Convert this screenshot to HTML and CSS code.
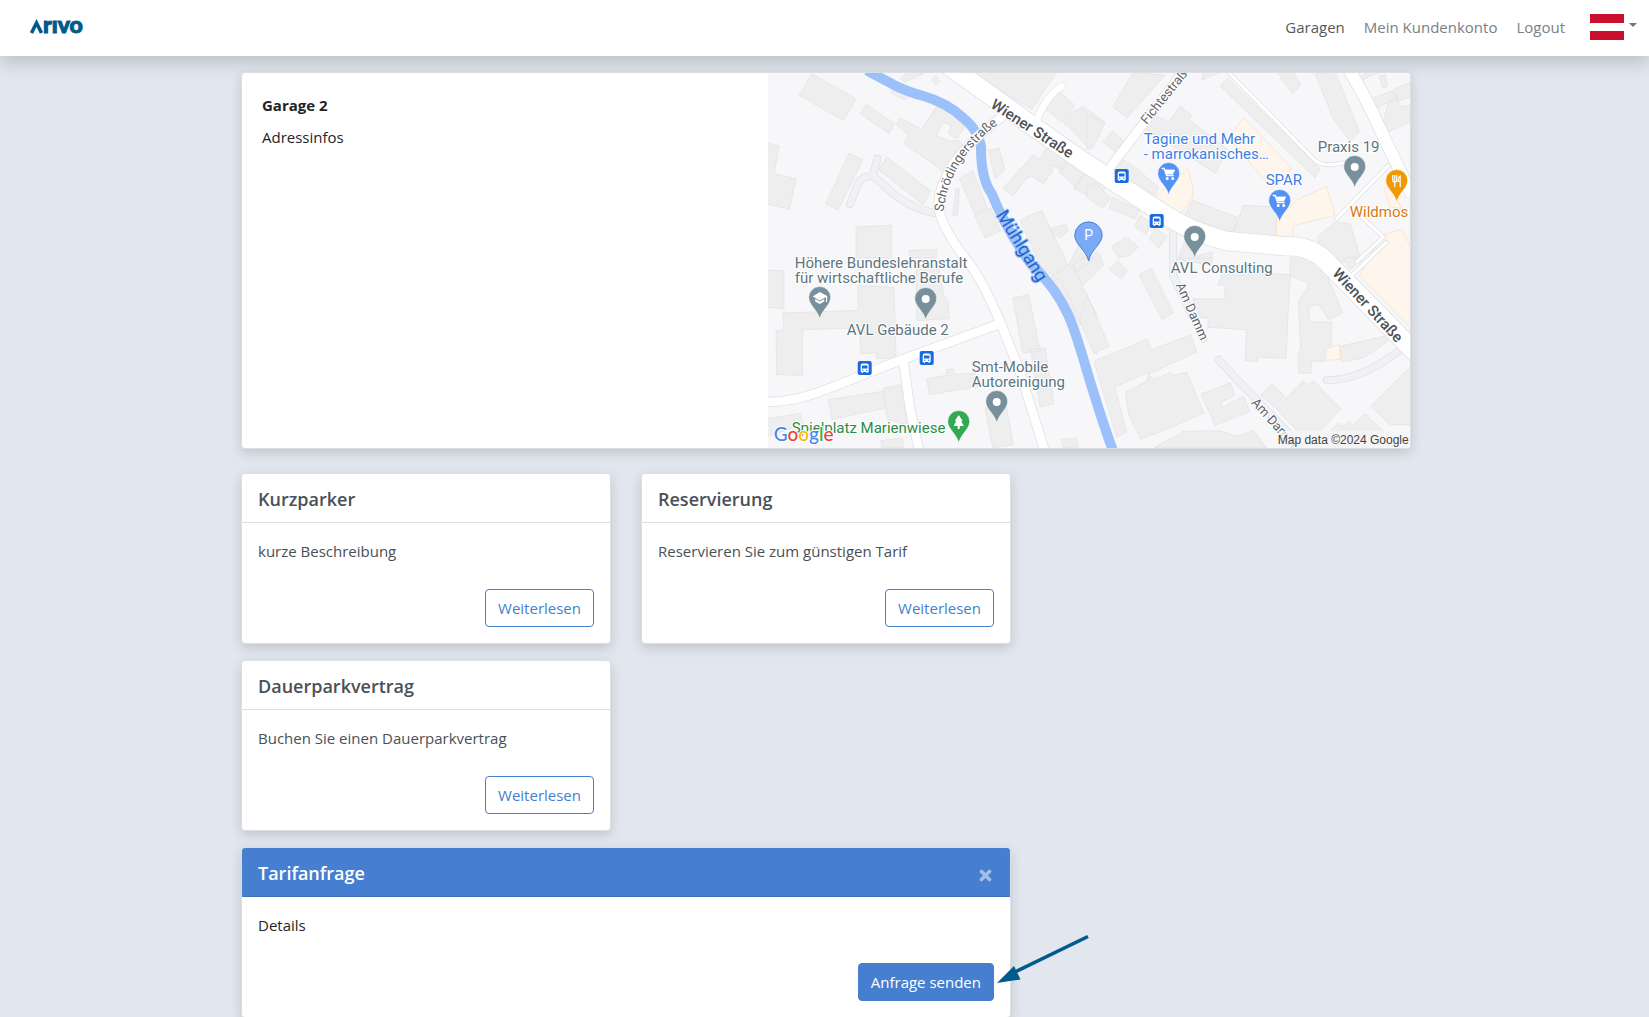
FILE: index.html
```html
<!DOCTYPE html>
<html lang="de">
<head>
<meta charset="utf-8">
<meta name="viewport" content="width=device-width, initial-scale=1">
<title>Arivo – Garage 2</title>
<link rel="stylesheet" href="styles.css">
</head>
<body>
<header class="navbar">
  <a class="brand" href="#" aria-label="Arivo">
    <svg width="64" height="24" viewBox="0 0 64 24">
      <path d="M3.500 18L8.500 8L13.500 18" fill="none" stroke="#005b8c" stroke-width="3.600"/>
      <text x="15" y="18" class="brand-text">rıvo</text>
    </svg>
  </a>
  <nav class="nav">
    <a class="nav-link active" href="#">Garagen</a>
    <a class="nav-link" href="#">Mein Kundenkonto</a>
    <a class="nav-link" href="#">Logout</a>
    <button class="lang" type="button" aria-label="Sprache">
      <span class="flag"></span><span class="caret"></span>
    </button>
  </nav>
</header>

<main class="page">
  <section class="card garage">
    <div class="garage-info">
      <h1>Garage 2</h1>
      <p>Adressinfos</p>
    </div>
    <svg class="map" viewBox="0 0 643 375" preserveAspectRatio="xMidYMid slice" role="img" aria-label="Karte">
      <defs>
        <g id="pin"><path d="M0 32C-2 23-11 18-11 10.500A10.800 10.800 0 0 1 11 10.500C11 18 2 23 0 32Z" stroke="#fff" stroke-width=".6"/></g>
        <g id="dot"><circle cx="0" cy="11" r="4" fill="#fff"/></g>
        <g id="cart" fill="none" stroke="#fff" stroke-width="1.500"><path d="M-7 5.500H-4.500L-2 12.500H5"/><path d="M-3.500 7H6L4 11H-2Z" fill="#fff" stroke-width=".8"/><circle cx="-1.500" cy="15.500" r=".8"/><circle cx="4" cy="15.500" r=".8"/></g>
        <g id="bus"><rect width="14" height="14" rx="2" fill="#1a6be0"/><path d="M3 4.500Q3 2.500 5 2.500H9Q11 2.500 11 4.500V11H10V12H8.800V11H5.200V12H4V11H3Z" fill="#fff"/><path d="M4.200 4.500H9.800V7.500H4.200ZM4.500 8.800H5.700V9.800H4.500ZM8.300 8.800H9.500V9.800H8.300Z" fill="#1a6be0"/></g>
        <path id="schroe" d="M175.500 139C179 113 189 91 205 74C214 64 222 57 236 47"/>
      </defs>
      <rect width="643" height="375" fill="#f7f7fa"/>
      <g transform="translate(-1 -1) scale(.33333)">
        <g class="bld">
          <path d="M135 5L268 80L230 146L97 70ZM298 97L384 155L367 185L280 125ZM398 137L465 172L512 100L598 157L572 200L546 185L553 160L530 150L508 190L550 208L576 205L606 232L585 268L560 270L540 305L460 248L412 215L425 190L390 158ZM384 45L430 70L415 84L372 62ZM0 212L38 222L22 305L88 320L68 412L0 396ZM248 243L288 264L214 414L177 396ZM361 255L492 358L468 398L335 292ZM578 320L618 296L662 408L625 428ZM672 408L702 476L656 497L624 432ZM568 350L578 352L572 430L558 430ZM665 235L698 228L714 295L685 320ZM798 250L818 262L840 226L906 265L890 294L850 280L858 296L830 335L795 312L778 320L740 372L708 350ZM905 262L958 295L930 345L876 300ZM958 298L1020 330L1000 392L920 348ZM760 445L825 415L895 560L960 700L940 760L850 600L836 615ZM850 470L895 457L905 475L885 497L860 485ZM268 465L374 460V558H268ZM428 535L510 533V558H428ZM945 500L1000 548L1010 580L950 640L905 580ZM620 0H870L795 112L722 68L655 22ZM830 108L880 62L922 98L910 125L950 103L1015 150L965 226L908 165ZM400 20L425 0L470 5L450 15L415 30ZM495 22L508 12L520 28L507 40Z"/>
          <g transform="translate(960 0)">
            <path d="M140 0L235 10L120 138L78 104ZM48 210L78 178L112 208L84 238ZM0 130L55 152L20 225L0 232ZM205 128L245 150L280 102L314 128L308 145L420 230L387 303L165 165ZM85 283L108 262L150 290L215 345L204 376L150 345L132 330L80 305ZM425 20L700 290L685 317L400 42ZM570 0H620L643 40L617 64ZM685 5L745 0L778 80L818 180L790 208L740 140ZM0 345L22 332L72 378L48 410L0 375ZM78 376L158 415L146 440L68 408ZM160 430L195 452L178 488L143 462ZM205 468L240 494L215 528L188 500ZM318 385L452 436L440 482L292 432ZM470 400L572 405V494L440 484ZM75 525L118 495L155 525L130 550L95 558ZM292 510L325 552L378 540L370 570H270ZM692 495L745 450L790 455L825 570H760L700 525ZM855 80L920 55L930 80L862 112ZM878 12L896 8L902 42L888 48ZM925 50L972 30V75L935 88ZM888 155L905 90L930 80L942 105L970 100V150L900 182ZM800 20L850 0H880L812 30ZM350 0H400L345 25Z"/>
          </g>
          <g transform="translate(0 558)">
            <path d="M0 36L52 38V152L0 148ZM48 165L274 157V82L382 88L388 300L330 302L328 284L282 288L278 210L108 215V352L30 350L28 218L52 216ZM448 22H515L530 108L545 130L548 182L450 188ZM738 120L786 110L820 280L768 285ZM792 275L835 270L862 438L820 446ZM480 362L538 352L540 335L560 333L563 350L625 345L640 385L488 410ZM185 425L348 400L358 450L196 484ZM350 390L406 380L420 500L362 485ZM0 483L100 466L110 500L0 535ZM655 450L715 425L740 560L678 570ZM342 548L408 540L410 570H345ZM885 545L930 540L935 570H890ZM850 60L905 20L920 30L990 170V290L880 60L860 70ZM920 20L950 0H985L930 40Z"/>
          </g>
          <g transform="translate(960 558)">
            <path d="M0 110L68 265L22 286L-20 190ZM157 50L194 30L260 165L226 184ZM68 35L92 8L122 38L104 62ZM276 0H380L370 20L300 10ZM410 42L610 50L598 300L512 298V310L475 308L480 215L364 208V180L340 178L318 122H415V82L392 80ZM22 310L182 243L195 275L312 230L330 282L196 344L180 345L84 388L120 522L90 538ZM116 402L180 370L186 345L200 365L250 345L260 352L300 342L352 465L220 522L162 543L126 470ZM343 408L432 374L444 412L402 435L408 448L470 415L490 460L385 502ZM522 410L556 378L594 415L562 448ZM568 450L650 368L664 380L680 368L762 452L665 560L640 530ZM202 570L290 520L400 518L450 535L500 518L540 570ZM720 530L755 495L770 505L788 490L800 500L835 468L890 520V570H740ZM852 445L972 325V500L910 500ZM610 0L680 5L718 45L768 165L725 186L695 138L665 148L670 192H735V272L715 310H675V345H635V280L642 275L635 128L665 85L660 72L610 55ZM760 265L900 233L910 245L830 300L765 312Z"/>
            <path d="M770 0H830L790 35Z"/>
          </g>
        </g>
        <g class="shop">
          <path d="M1432 138L1574 288L1550 325L1515 350L1385 195ZM1235 315L1264 290L1280 352L1276 380L1240 430L1165 378L1205 340ZM1570 405L1590 385L1680 342L1705 430L1580 462V494L1530 493V440ZM1845 490L1905 472L1935 530V770L1778 612Z"/>
          <path d="M1852 350L1870 340L1905 410L1870 405ZM1678 830L1718 818L1722 862L1676 865Z"/>
        </g>
        <path class="water" d="M300 -5L380 38Q430 62 470 72Q540 92 590 138Q635 175 643 225Q642 320 675 365Q720 475 790 572Q870 650 905 730C945 820 960 920 1040 1140"/>
        <g class="path-edge"><path d="M332 260L318 312Q285 312 275 335L250 396M318 312L350 338Q420 410 515 425M1219 460V610L1310 800M1355 863L1600 1120M1680 925Q1780 925 1895 838"/></g>
        <g class="path-fill"><path d="M332 260L318 312Q285 312 275 335L250 396M318 312L350 338Q420 410 515 425M1219 460V610L1310 800M1355 863L1600 1120M1680 925Q1780 925 1895 838"/></g>
        <g class="edge">
          <path class="w54" d="M530 -30L720 105L820 178L960 275L1060 340L1190 425Q1270 480 1380 507L1560 523Q1640 520 1690 580L1950 845"/>
          <path class="w28" d="M705 135Q520 270 515 400Q520 460 600 565Q640 610 700 748L760 900L835 1140M0 990C120 990 200 940 400 865L700 755M410 868L430 1010L458 1140M1260 -15L1035 280"/>
          <path class="w34" d="M1745 -10Q1800 80 1830 150L1930 360"/>
          <path class="w20" d="M885 43Q840 70 812 140"/>
          <path class="w10" d="M1380 -5L1640 260Q1665 290 1740 270M1865 280L1710 440M1770 570L1850 495L1780 430M1755 610L1860 510"/>
        </g>
        <g class="road">
          <path class="w54" d="M530 -30L720 105L820 178L960 275L1060 340L1190 425Q1270 480 1380 507L1560 523Q1640 520 1690 580L1950 845"/>
          <path class="w28" d="M705 135Q520 270 515 400Q520 460 600 565Q640 610 700 748L760 900L835 1140M0 990C120 990 200 940 400 865L700 755M410 868L430 1010L458 1140M1260 -15L1035 280"/>
          <path class="w34" d="M1745 -10Q1800 80 1830 150L1930 360"/>
          <path class="w20" d="M885 43Q840 70 812 140"/>
          <path class="w10" d="M1380 -5L1640 260Q1665 290 1740 270M1865 280L1710 440M1770 570L1850 495L1780 430M1755 610L1860 510"/>
        </g>
      </g>
      <g class="street">
        <text class="big" transform="translate(222 34) rotate(33)">Wiener Straße</text>
        <text class="big" transform="translate(564 201) rotate(47)">Wiener Straße</text>
        <text><textPath href="#schroe">Schrödingerstraße</textPath></text>
        <text transform="translate(379 52) rotate(-51)">Fichtestraße</text>
        <text transform="translate(408 212) rotate(66)">Am Damm</text>
        <text transform="translate(483 330) rotate(48)">Am Damm</text>
        <text class="river" transform="translate(228 142) rotate(58)">Mühlgang</text>
      </g>
      <g class="poi">
        <text x="27" y="195">Höhere Bundeslehranstalt</text>
        <text x="27" y="210">für wirtschaftliche Berufe</text>
        <text x="79" y="262">AVL Gebäude 2</text>
        <text x="204" y="299">Smt-Mobile</text>
        <text x="204" y="314">Autoreinigung</text>
        <text x="403" y="200">AVL Consulting</text>
        <text x="550" y="79">Praxis 19</text>
        <text class="blue" x="376" y="71">Tagine und Mehr</text>
        <text class="blue" x="376" y="86">- marrokanisches…</text>
        <text class="blue" x="498" y="112">SPAR</text>
        <text class="orange" x="582" y="144">Wildmos</text>
        <text class="green" x="24" y="360">Spielplatz Marienwiese</text>
      </g>
      <g fill="#78909c">
        <use href="#pin" x="52" y="214"/><use href="#pin" x="158" y="215"/><use href="#pin" x="229" y="318"/><use href="#pin" x="427" y="153"/><use href="#pin" x="587" y="83"/>
      </g>
      <use href="#dot" x="158" y="215"/><use href="#dot" x="229" y="318"/><use href="#dot" x="427" y="153"/><use href="#dot" x="587" y="83"/>
      <path d="M52 219L59.500 223V229H58.200V224L52 227.500L45 223.500ZM47.500 226L52 228.500L56.500 226V228.500L52 231L47.500 228.500Z" fill="#fff"/>
      <g fill="#5491f5"><use href="#pin" x="401" y="90"/><use href="#pin" x="512" y="117"/></g>
      <use href="#cart" x="401" y="90"/><use href="#cart" x="512" y="117"/>
      <use href="#pin" x="629" y="97" fill="#f29900"/>
      <path d="M625 102V107Q625 109 627 109V114M627 102V109M629 102V107Q629 109 627 109M632.500 114V103Q630.500 104 630.500 108.500H632.500" fill="none" stroke="#fff" stroke-width="1.200"/>
      <use href="#pin" x="191" y="338" fill="#34a853"/>
      <path d="M191 342L195 348H193.500L196 353H192V356H190V353H186L188.500 348H187Z" fill="#fff"/>
      <path d="M321 188C318 176 307 172 307 161.500A13.800 13.800 0 0 1 334.500 161.500C334.500 172 323 176 321 188Z" fill="#7baaf7" stroke="#4d7fd0"/>
      <text class="park" x="321" y="167">P</text>
      <use href="#bus" x="347" y="96"/><use href="#bus" x="382" y="141"/><use href="#bus" x="90" y="288"/><use href="#bus" x="152" y="278"/>
      <text class="google" x="6" y="368"><tspan fill="#4285f4">G</tspan><tspan fill="#ea4335">o</tspan><tspan fill="#fbbc04">o</tspan><tspan fill="#4285f4">g</tspan><tspan fill="#34a853">l</tspan><tspan fill="#ea4335">e</tspan></text>
      <rect x="511" y="358" width="132" height="17" fill="#f5f5f5" opacity=".75"/>
      <text class="copy" x="641" y="371">Map data ©2024 Google</text>
    </svg>
  </section>

  <div class="offers">
    <article class="card offer">
      <h2>Kurzparker</h2>
      <div class="card-body"><p>kurze Beschreibung</p><button class="btn" type="button">Weiterlesen</button></div>
    </article>
    <article class="card offer">
      <h2>Reservierung</h2>
      <div class="card-body"><p>Reservieren Sie zum günstigen Tarif</p><button class="btn" type="button">Weiterlesen</button></div>
    </article>
    <article class="card offer newline">
      <h2>Dauerparkvertrag</h2>
      <div class="card-body"><p>Buchen Sie einen Dauerparkvertrag</p><button class="btn" type="button">Weiterlesen</button></div>
    </article>
    <article class="card request">
      <div class="request-head"><h2>Tarifanfrage</h2><button class="close" type="button" aria-label="Schließen">
        <svg width="13" height="13" viewBox="0 0 13 13"><path d="M2.500 2.500L10.500 10.500M10.500 2.500L2.500 10.500" stroke="#fff" stroke-width="3.600" stroke-linecap="round"/></svg>
      </button></div>
      <div class="card-body"><p>Details</p><button class="btn primary" type="button">Anfrage senden</button></div>
      <svg class="pointer" width="96" height="52" viewBox="0 0 96 52" aria-hidden="true"><path d="M20 38L93 2.500" stroke="#005b8c" stroke-width="3.600"/><path d="M2 49L19 32L25.500 45.500Z" fill="#005b8c"/></svg>
    </article>
  </div>
</main>
</body>
</html>
```

FILE: styles.css
```css
* { box-sizing: border-box; }
body {
  margin: 0;
  background: #e2e6ee;
  color: #212529;
  font: 15px/24px "Open Sans", "Noto Sans", sans-serif;
}
h1, h2, p { margin: 0; }
button { font: inherit; cursor: pointer; }

.navbar {
  display: flex;
  align-items: center;
  justify-content: space-between;
  height: 56px;
  padding: 0 12px 2px 28px;
  background: #fff;
  box-shadow: 0 8px 16px rgba(0, 0, 0, .15);
}
.brand { display: flex; }
.brand-text {
  font: 900 23px Lato, sans-serif;
  fill: #005b8c;
  stroke: #005b8c;
  stroke-width: 1px;
}
.nav { display: flex; align-items: center; gap: 19px; }
.nav-link { color: #7a8087; text-decoration: none; }
.nav-link.active { color: #54595e; }
.lang {
  display: flex;
  gap: 5px;
  margin-left: 6px;
  padding: 0;
  border: 0;
  background: none;
}
.flag {
  width: 34px;
  height: 26px;
  background: linear-gradient(#c8102e 0 9px, #fff 9px 17px, #c8102e 17px);
}
.caret {
  margin-top: 9px;
  height: 4px;
  border: 4px solid transparent;
  border-top-color: #6f757b;
  border-bottom: 0;
}

.page {
  max-width: 1173px;
  margin: 16px auto 0;
  padding-left: 3px;
}
.card {
  background: #fff;
  border: 1px solid #dcdfe1;
  border-radius: 4px;
  box-shadow: 0 4px 12px rgba(0, 0, 0, .15);
}
.garage {
  display: grid;
  grid-template-columns: 45fr 55fr;
  overflow: hidden;
}
.garage-info { padding: 20px; }
.garage h1 { margin-bottom: 8px; font-size: 15px; line-height: 24px; }
.map { display: block; width: 100%; height: 375px; }

.offers {
  display: grid;
  grid-template-columns: repeat(3, 1fr);
  gap: 16px 30px;
  margin-top: 24px;
}
.newline { grid-column: 1; }
.offer { color: #495057; }
.card h2 { font-size: 18px; font-weight: 600; line-height: 24px; }
.offer h2 { padding: 13px 16px 11px; border-bottom: 1px solid #dcdfe1; }
.card-body {
  display: flex;
  flex-direction: column;
  gap: 26px;
  padding: 16px;
}
.btn {
  align-self: flex-end;
  height: 38px;
  padding: 0 12px;
  border: 1px solid #467fcf;
  border-radius: 4px;
  background: #fff;
  color: #467fcf;
}
.primary { background: #467fcf; color: #fff; }

.request { position: relative; grid-column: 1 / 3; }
.request-head {
  display: flex;
  align-items: center;
  justify-content: space-between;
  padding: 13px 16px 11px;
  border-bottom: 1px solid #3f72ba;
  border-radius: 3px 3px 0 0;
  background: #467fcf;
  color: #fff;
}
.close {
  display: flex;
  padding: 4px 2px 0;
  border: 0;
  background: none;
  opacity: .5;
}
.pointer { position: absolute; left: calc(100% - 15px); top: 86px; }

.bld path { fill: #eee; stroke: #dfe1e3; stroke-width: 2; }
.shop path { fill: #fef5ec; stroke: #fbdcbc; stroke-width: 2; }
.water { fill: none; stroke: #9cc0fa; stroke-width: 30; }
.path-edge, .path-fill, .edge, .road { fill: none; stroke-linecap: round; stroke-linejoin: round; }
.path-edge { stroke: #dcdfe3; stroke-width: 24; }
.path-fill { stroke: #eff1f3; stroke-width: 20; }
.edge { stroke: #e0e2e6; }
.road { stroke: #fff; }
.edge .w54 { stroke-width: 60; }
.road .w54 { stroke-width: 55; }
.edge .w34 { stroke-width: 40; }
.road .w34 { stroke-width: 35; }
.edge .w28 { stroke-width: 31; }
.road .w28 { stroke-width: 26; }
.edge .w20 { stroke-width: 24; }
.road .w20 { stroke-width: 20; }
.edge .w10 { stroke-width: 14; }
.road .w10 { stroke-width: 9; }
.map text { font-family: Roboto, sans-serif; paint-order: stroke; stroke: #fff; stroke-width: 2px; stroke-linejoin: round; }
.street text { font-size: 13px; fill: #5f6368; }
.street .big { font-size: 15px; font-weight: 500; fill: #4c5054; }
.street .river { font-size: 18px; fill: #1a66d2; stroke: #9cc0fa; }
.poi text { font-size: 15px; fill: #5c7580; }
.poi .blue { fill: #3c7de6; }
.poi .orange { fill: #d9770f; }
.poi .green { fill: #2a8c45; }
.map .park { font-size: 14px; fill: #fff; stroke: none; text-anchor: middle; }
.map .google { font: 500 19px Lato, sans-serif; }
.map .copy { font: 12px "Liberation Sans", sans-serif; fill: #444; stroke: none; text-anchor: end; }
```
